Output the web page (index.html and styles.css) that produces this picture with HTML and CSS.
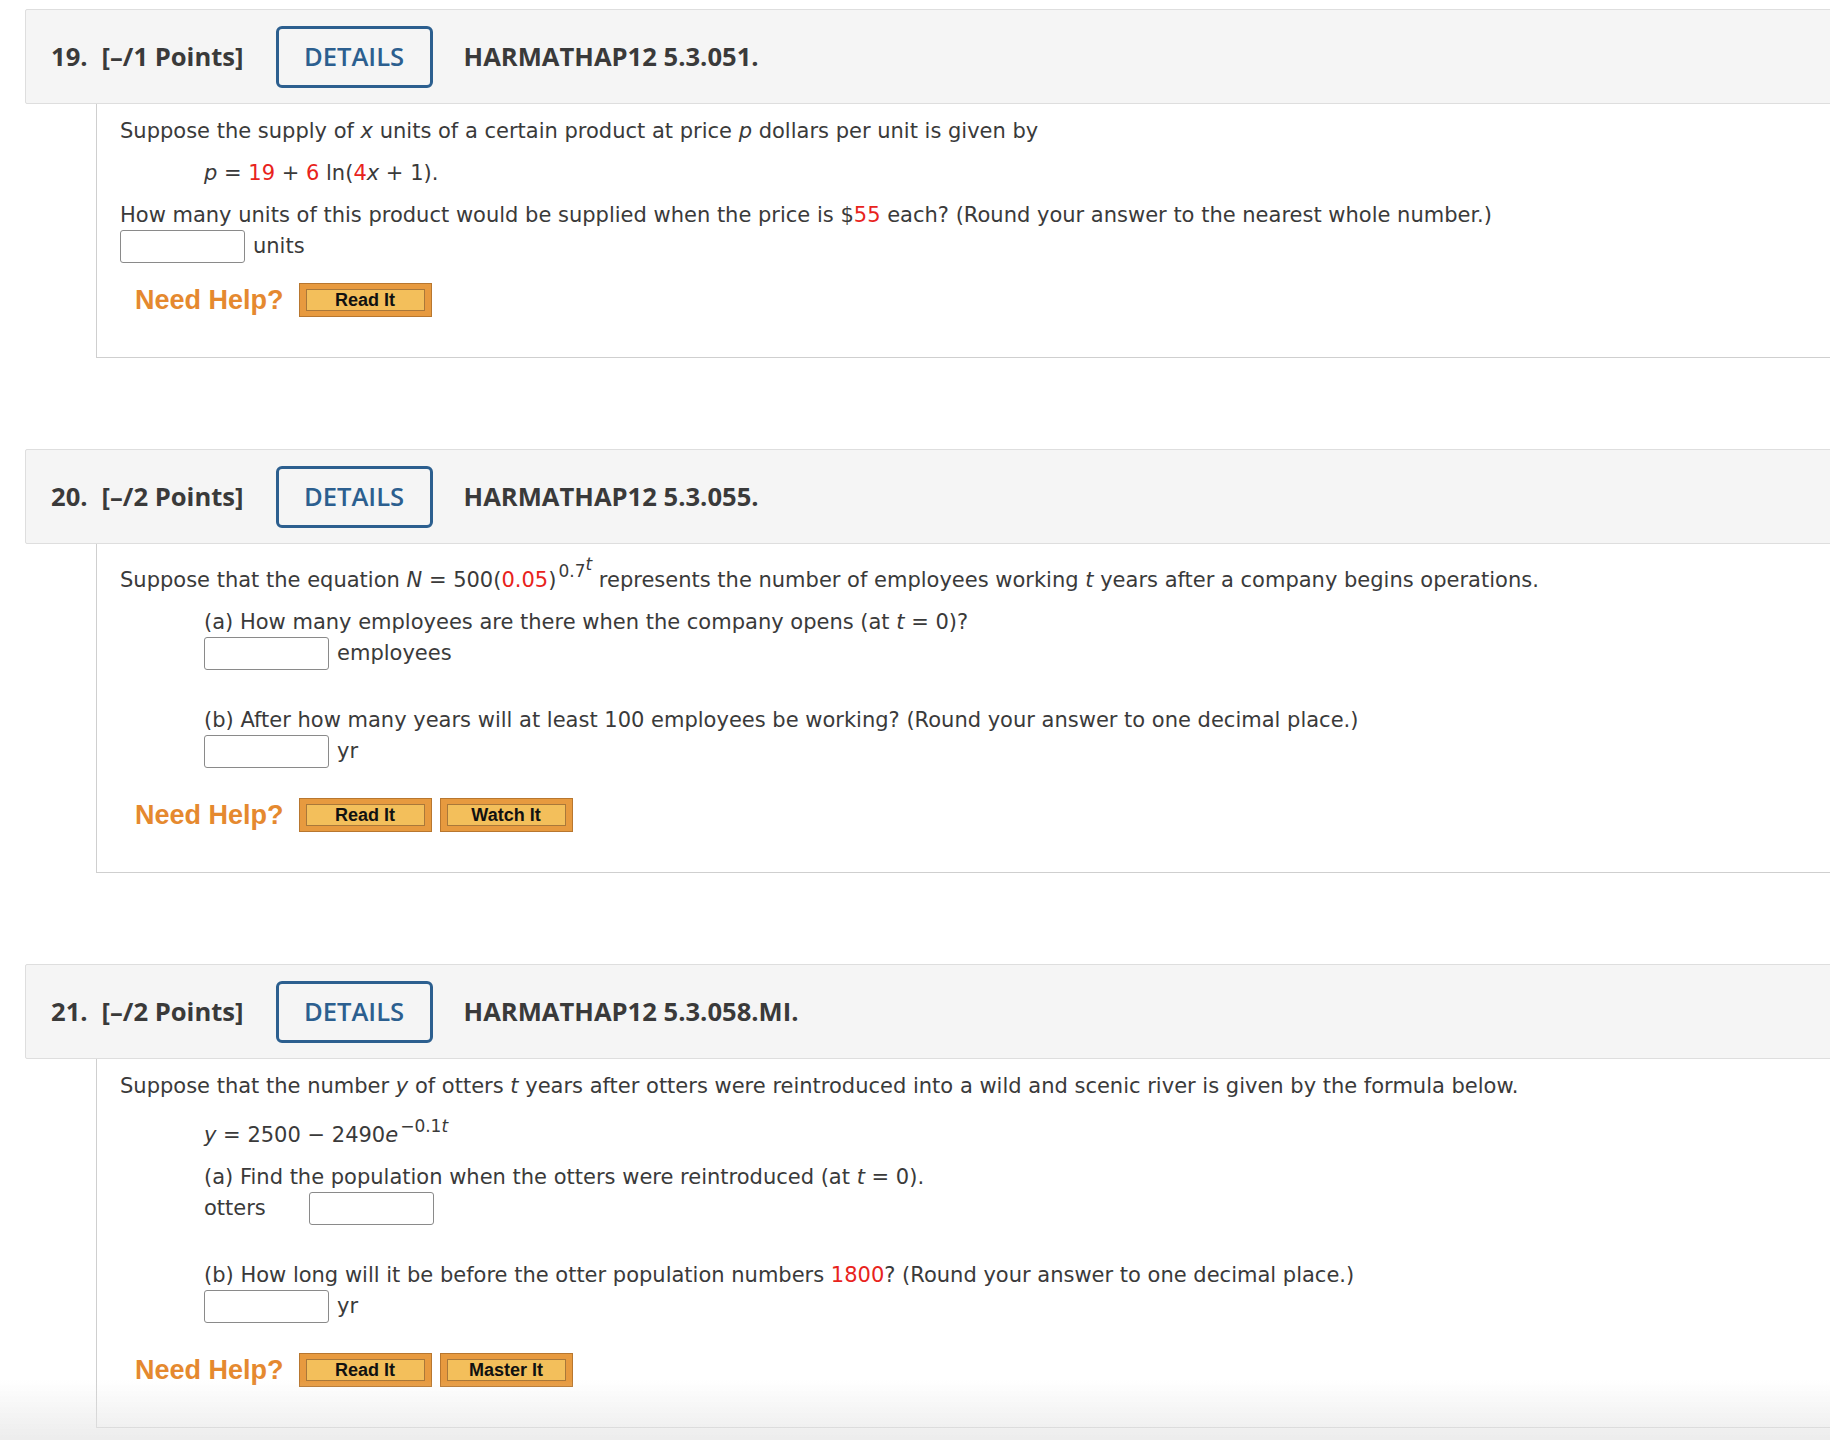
FILE: index.html
```html
<!DOCTYPE html>
<html lang="en">
<head>
<meta charset="utf-8">
<title>Questions</title>
<link rel="stylesheet" href="styles.css">
</head>
<body>
<main class="page">

  <section class="question">
    <div class="q-head">
      <span class="q-num">19.</span>
      <span class="q-points">[–/1 Points]</span>
      <button class="details">DETAILS</button>
      <span class="q-code">HARMATHAP12 5.3.051.</span>
    </div>
    <div class="q-body q-body-19">
      <p class="line">Suppose the supply of <i>x</i> units of a certain product at price <i>p</i> dollars per unit is given by</p>
      <p class="line indent eq">
        <i>p</i> = <span class="red">19</span> + <span class="red">6</span> ln(<span class="red">4</span><i>x</i> + 1).
      </p>
      <p class="line">How many units of this product would be supplied when the price is $<span class="red">55</span> each? (Round your answer to the nearest whole number.)</p>
      <div class="answer"><span class="input"></span><span class="unit">units</span></div>
      <div class="help help-tight">
        <span class="need">Need Help?</span>
        <span class="hbtn"><span class="hbtn-in">Read It</span></span>
      </div>
    </div>
  </section>

  <section class="question">
    <div class="q-head">
      <span class="q-num">20.</span>
      <span class="q-points">[–/2 Points]</span>
      <button class="details">DETAILS</button>
      <span class="q-code">HARMATHAP12 5.3.055.</span>
    </div>
    <div class="q-body q-body-sup">
      <p class="line">Suppose that the equation <i>N</i> = 500(<span class="red">0.05</span>)<sup class="sup">0.7<sup class="sup2"><i>t</i></sup></sup> represents the number of employees working <i>t</i> years after a company begins operations.</p>
      <p class="line indent">(a) How many employees are there when the company opens (at <i>t</i> = 0)?</p>
      <div class="answer indent"><span class="input"></span><span class="unit">employees</span></div>
      <p class="line indent part">(b) After how many years will at least 100 employees be working? (Round your answer to one decimal place.)</p>
      <div class="answer indent"><span class="input"></span><span class="unit">yr</span></div>
      <div class="help">
        <span class="need">Need Help?</span>
        <span class="hbtn"><span class="hbtn-in">Read It</span></span>
        <span class="hbtn"><span class="hbtn-in">Watch It</span></span>
      </div>
    </div>
  </section>

  <section class="question">
    <div class="q-head">
      <span class="q-num">21.</span>
      <span class="q-points">[–/2 Points]</span>
      <button class="details">DETAILS</button>
      <span class="q-code">HARMATHAP12 5.3.058.MI.</span>
    </div>
    <div class="q-body">
      <p class="line">Suppose that the number <i>y</i> of otters <i>t</i> years after otters were reintroduced into a wild and scenic river is given by the formula below.</p>
      <p class="line indent eq-sup"><i>y</i> = 2500 − 2490<i>e</i><sup class="sup">−0.1<i>t</i></sup></p>
      <p class="line indent">(a) Find the population when the otters were reintroduced (at <i>t</i> = 0).</p>
      <div class="answer indent"><span class="label">otters</span><span class="input"></span></div>
      <p class="line indent part">(b) How long will it be before the otter population numbers <span class="red">1800</span>? (Round your answer to one decimal place.)</p>
      <div class="answer indent"><span class="input"></span><span class="unit">yr</span></div>
      <div class="help">
        <span class="need">Need Help?</span>
        <span class="hbtn"><span class="hbtn-in">Read It</span></span>
        <span class="hbtn"><span class="hbtn-in">Master It</span></span>
      </div>
    </div>
  </section>

</main>
<div class="fade"></div>
</body>
</html>
```

FILE: styles.css
```css
html, body {
  margin: 0;
  padding: 0;
  background: #ffffff;
  overflow-x: hidden;
}

body {
  font-family: "DejaVu Sans", Verdana, sans-serif;
  color: #3a3a3a;
}

.page {
  padding: 9px 0 0 25px;
  margin-right: -40px;
}

.question + .question {
  margin-top: 91px;
}

.q-head {
  display: flex;
  align-items: center;
  height: 93px;
  background: #f5f5f5;
  border: 1px solid #dedede;
  border-radius: 2px 0 0 2px;
  padding-left: 25px;
  font-family: "Open Sans", "Liberation Sans", sans-serif;
  font-weight: 700;
  font-size: 25.6px;
  color: #3a3a3a;
}

.q-num {
  margin-right: 14px;
}

.q-points {
  margin-right: 32px;
}

.details {
  box-sizing: border-box;
  width: 157px;
  height: 62px;
  border: 3px solid #2c5f8f;
  border-radius: 6px;
  background: transparent;
  color: #2c5f8f;
  font-family: "Open Sans", "Liberation Sans", sans-serif;
  font-weight: 600;
  font-size: 25.6px;
  padding: 0;
  margin-right: 31px;
}

.q-code {
  color: #3a3a3a;
}

.q-body {
  margin-left: 71px;
  border-left: 1px solid #cfcfcf;
  border-bottom: 1px solid #cfcfcf;
  padding: 14px 0 40px 23px;
  font-size: 21px;
}

.q-body-sup {
  padding-top: 23px;
}

.line {
  margin: 0 0 16px 0;
  line-height: 26px;
  white-space: nowrap;
}

.line i {
  font-style: italic;
}

.indent {
  margin-left: 84px;
}

.eq-sup {
  margin-top: 23px;
}

.part {
  margin-top: 37px;
}

.red {
  color: #e8231c;
}

.sup {
  font-size: 17px;
  vertical-align: 0;
  position: relative;
  top: -10px;
  line-height: 0;
  margin-left: 2px;
}

.sup2 {
  font-size: 17px;
  vertical-align: 0;
  position: relative;
  top: -7px;
  line-height: 0;
}

.answer {
  display: flex;
  align-items: center;
  margin-top: -15px;
  height: 34px;
}

.input {
  box-sizing: border-box;
  display: inline-block;
  width: 125px;
  height: 33px;
  border: 1px solid #8a8a8a;
  border-radius: 3px;
  background: #fff;
}

.unit {
  margin-left: 8px;
}

.label {
  width: 105px;
}

.help {
  display: flex;
  align-items: center;
  gap: 8px;
  margin-top: 30px;
  margin-left: 15px;
}

.help-tight {
  margin-top: 20px;
}

.need {
  font-family: "Liberation Sans", Arial, sans-serif;
  font-weight: 700;
  font-size: 27px;
  color: #e5892f;
  margin-right: 7px;
}

.hbtn {
  box-sizing: border-box;
  display: flex;
  width: 133px;
  height: 34px;
  padding: 5px 6px;
  background: #e79a3f;
  border: 1px solid #b8772f;
}

.hbtn-in {
  flex: 1;
  display: flex;
  align-items: center;
  justify-content: center;
  background: #f3bf5b;
  border: 1px solid #a9783a;
  font-family: "Liberation Sans", Arial, sans-serif;
  font-weight: 700;
  font-size: 18px;
  color: #111;
}

.fade {
  position: fixed;
  left: 0;
  right: 0;
  bottom: 0;
  height: 60px;
  background: linear-gradient(to bottom, rgba(230, 230, 230, 0), rgba(230, 230, 230, 0.75));
  pointer-events: none;
}
```
